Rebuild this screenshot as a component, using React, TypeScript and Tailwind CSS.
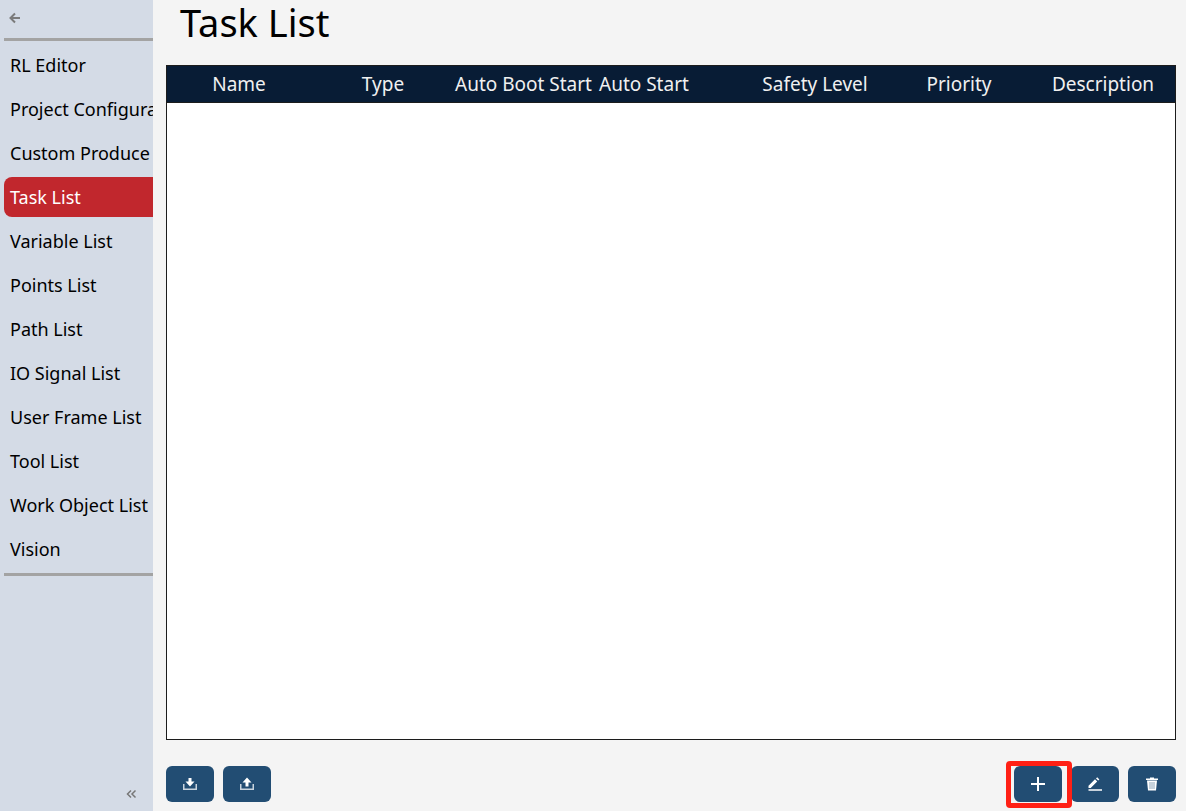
import React, { useState } from "react";

const menu = [
  "RL Editor",
  "Project Configuration",
  "Custom Produce",
  "Task List",
  "Variable List",
  "Points List",
  "Path List",
  "IO Signal List",
  "User Frame List",
  "Tool List",
  "Work Object List",
  "Vision",
];

const columns = [
  { name: "Name", align: "text-center" },
  { name: "Type", align: "text-center" },
  { name: "Auto Boot Start", align: "text-left" },
  { name: "Auto Start", align: "text-left" },
  { name: "Safety Level", align: "text-center" },
  { name: "Priority", align: "text-center" },
  { name: "Description", align: "text-center" },
];

const ToolButton = ({
  label,
  children,
}: {
  label: string;
  children: React.ReactNode;
}) => (
  <button
    type="button"
    aria-label={label}
    className="flex h-9 w-12 items-center justify-center rounded-md bg-[#224d73] text-white hover:cursor-pointer"
  >
    <svg width="16" height="16" viewBox="0 0 16 16" fill="none">
      {children}
    </svg>
  </button>
);

const Sidebar = () => {
  const [active, setActive] = useState("Task List");

  return (
    <aside className="flex w-[153px] shrink-0 flex-col overflow-hidden bg-[#d4dbe6] pl-1">
      <div className="flex h-[38px] shrink-0 items-center pb-0.5 pl-1">
        <button type="button" aria-label="Back" className="text-[#7b7b7b]">
          <svg width="14" height="14" viewBox="0 0 14 14" fill="none">
            <path d="M7 2.5 2.5 7 7 11.5M3 7h9" stroke="currentColor" strokeWidth="2" />
          </svg>
        </button>
      </div>
      <nav className="flex flex-col gap-1 border-y-3 border-[#a3a3a3] py-1">
        {menu.map((item) => (
          <button
            key={item}
            type="button"
            onClick={() => setActive(item)}
            className={`h-10 overflow-hidden rounded-l-lg pl-1.5 text-left text-[18px] whitespace-nowrap ${
              item == active ? "bg-[#c1272d] text-white" : "text-black"
            }`}
          >
            {item}
          </button>
        ))}
      </nav>
      <button
        type="button"
        aria-label="Collapse menu"
        className="mt-auto mr-4 mb-[11px] self-end text-[#777777]"
      >
        <svg width="12" height="12" viewBox="0 0 12 12" fill="none">
          <path d="M6 2.5 2.500 6 6 9.500M10.500 2.500 7 6l3.500 3.500" stroke="currentColor" strokeWidth="1.5" />
        </svg>
      </button>
    </aside>
  );
};

const App = () => {
  return (
    <div className="flex h-screen bg-[#f4f4f4] font-['Noto_Sans','Open_Sans',sans-serif]">
      <Sidebar />
      <main className="flex min-w-0 flex-1 flex-col pr-2.5 pb-[9px] pl-[13px]">
        <h1 className="h-[65px] shrink-0 pl-3.5 text-[38px] leading-[44px] text-black">
          Task List
        </h1>
        <div className="min-h-0 flex-1 border border-[#1c1c1c] bg-white">
          <table className="w-full table-fixed border-collapse">
            <thead>
              <tr className="h-9 border-b border-[#1c1c1c] bg-[#081c35]">
                {columns.map((col) => (
                  <th
                    key={col.name}
                    scope="col"
                    className={`p-0 text-[19px] font-normal whitespace-nowrap text-[#f0f0f0] ${col.align}`}
                  >
                    {col.name}
                  </th>
                ))}
              </tr>
            </thead>
            <tbody></tbody>
          </table>
        </div>
        <div className="mt-[26px] flex shrink-0 justify-between">
          <div className="flex gap-[9px]">
            <ToolButton label="Import">
              <path d="M1.750 8v5.250h12.500V8" stroke="#c9d4de" strokeWidth="1.500" />
              <path d="M6.500 2h3v3.500h3L8 10.500 3.500 5.500h3z" fill="currentColor" />
            </ToolButton>
            <ToolButton label="Export">
              <path d="M1.750 8v5.250h12.500V8" stroke="#c9d4de" strokeWidth="1.500" />
              <path d="M6.500 10.500h3V6.500h3L8 1.500 3.500 6.500h3z" fill="currentColor" />
            </ToolButton>
          </div>
          <div className="flex gap-[9px]">
            <div className="relative">
              <ToolButton label="Add task">
                <path d="M8 1v14M1 8h14" stroke="currentColor" strokeWidth="2" />
              </ToolButton>
              {/* highlight frame around the add button */}
              <div className="pointer-events-none absolute -top-[5px] -right-2.5 -bottom-1.5 -left-2 z-10 rounded-sm border-5 border-[#ff2015]" />
            </div>
            <ToolButton label="Edit task">
              <path d="M1.500 14h13.500" stroke="currentColor" strokeWidth="1.500" />
              <path d="M1.500 12v-2.200L8 3.300l2.200 2.200L3.700 12zM9 2.400l1.200-1.200 2.200 2.200-1.200 1.200z" fill="currentColor" />
            </ToolButton>
            <ToolButton label="Delete task">
              <path d="M2 2.500h4v-1h4v1h4V4H2z" fill="currentColor" />
              <path d="M3 4.500h10l-1 10H4z" fill="currentColor" />
              <path d="M6 6v7M8 6v7M10 6v7" stroke="#8fa5b8" strokeWidth="1" />
            </ToolButton>
          </div>
        </div>
      </main>
    </div>
  );
};

export default App;
